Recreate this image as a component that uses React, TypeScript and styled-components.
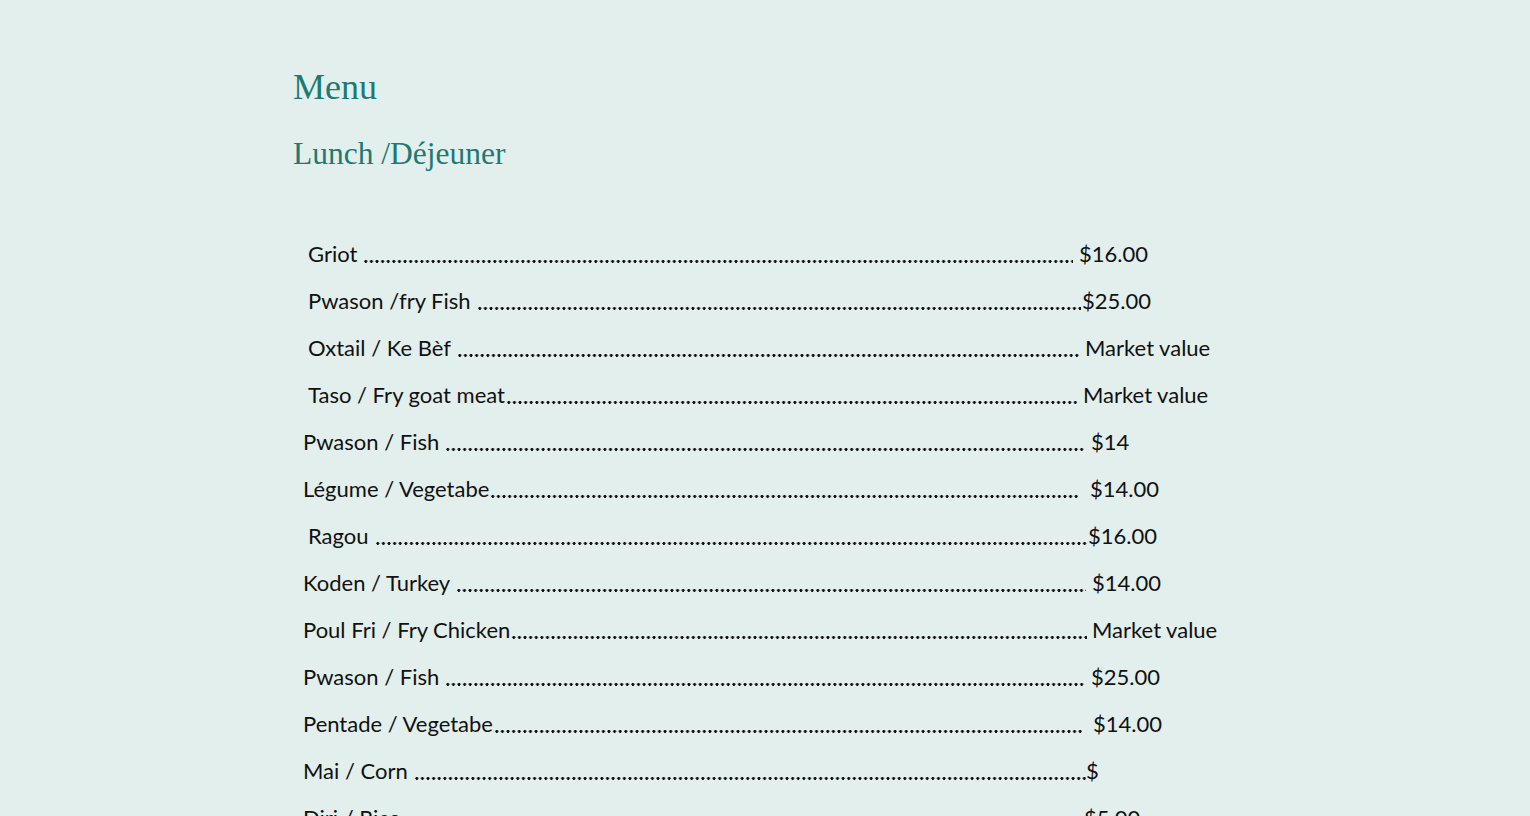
import React from 'react';
import styled, { createGlobalStyle } from 'styled-components';

interface MenuItem {
  name: string;
  price: string;
  indent: number; // left offset of the name inside the list
  end: number; // where the dotted leader stops, from the list's left edge
  gap: number; // space between leader and price
}

const items: MenuItem[] = [
  { name: 'Griot', price: '$16.00', indent: 15, end: 780, gap: 6 },
  { name: 'Pwason /fry Fish', price: '$25.00', indent: 15, end: 788, gap: 1 },
  { name: 'Oxtail / Ke Bèf', price: 'Market value', indent: 15, end: 786, gap: 6 },
  { name: 'Taso / Fry goat meat', price: 'Market value', indent: 15, end: 784, gap: 6 },
  { name: 'Pwason / Fish', price: '$14', indent: 10, end: 792, gap: 6 },
  { name: 'Légume / Vegetabe', price: '$14.00', indent: 10, end: 786, gap: 11 },
  { name: 'Ragou', price: '$16.00', indent: 15, end: 794, gap: 1 },
  { name: 'Koden / Turkey', price: '$14.00', indent: 10, end: 793, gap: 6 },
  { name: 'Poul Fri / Fry Chicken', price: 'Market value', indent: 10, end: 794, gap: 5 },
  { name: 'Pwason / Fish', price: '$25.00', indent: 10, end: 792, gap: 6 },
  { name: 'Pentade / Vegetabe', price: '$14.00', indent: 10, end: 789, gap: 11 },
  { name: 'Mai / Corn', price: '$', indent: 10, end: 793, gap: 0 },
  { name: 'Diri / Rice', price: '$5.00', indent: 10, end: 791, gap: 0 },
];

// names glued to their leader (no space before the dots)
const tight = new Set(['Taso / Fry goat meat', 'Légume / Vegetabe', 'Poul Fri / Fry Chicken', 'Pentade / Vegetabe']);

const App: React.FC = () => {
  return (
    <>
      <GlobalStyle />
      <Page>
        <Title>Menu</Title>
        <Subtitle>Lunch /Déjeuner</Subtitle>
        <List>
          {items.map((item, i) => (
            <Row key={i} $indent={item.indent}>
              <Line $width={item.end - item.indent}>
                <Name>{item.name}</Name>
                <Leader $tight={tight.has(item.name)} />
              </Line>
              <Price $gap={item.gap}>{item.price}</Price>
            </Row>
          ))}
        </List>
      </Page>
    </>
  );
};

const GlobalStyle = createGlobalStyle`
  html, body {
    margin: 0;
    padding: 0;
    background: #e2efed;
  }
  body {
    font-family: Lato, 'Liberation Sans', sans-serif;
    color: #111111;
  }
`;

const Page = styled.div`
  max-width: 944px;
  margin: 0 auto;
  padding-top: 64px;
  height: 816px;
  box-sizing: border-box;
  overflow: hidden;
`;

const Title = styled.h1`
  margin: 0;
  font-family: 'Liberation Serif', serif;
  font-weight: 400;
  font-size: 36px;
  line-height: 46px;
  color: #1e7a70;
`;

const Subtitle = styled.h2`
  margin: 24px 0 0;
  font-family: 'Liberation Serif', serif;
  font-weight: 400;
  font-size: 31.5px;
  line-height: 40px;
  color: #1e7a70;
`;

const List = styled.div`
  margin-top: 66px;
  display: flex;
  flex-direction: column;
  gap: 19px;
`;

const Row = styled.div<{ $indent: number }>`
  display: flex;
  align-items: baseline;
  padding-left: ${(p) => p.$indent}px;
  font-size: 22px;
  line-height: 28px;
  white-space: nowrap;
`;

const Line = styled.div<{ $width: number }>`
  display: flex;
  flex: none;
  width: ${(p) => p.$width}px;
`;

const Name = styled.span`
  flex: none;
`;

const Leader = styled.span<{ $tight: boolean }>`
  flex: 1;
  margin-left: ${(p) => (p.$tight ? 1 : 6)}px;
  background-image: radial-gradient(circle at 2.8px 21.3px, #111111 1.3px, transparent 1.7px);
  background-size: 5.62px 28px;
  background-repeat: repeat-x;
`;

const Price = styled.span<{ $gap: number }>`
  flex: none;
  margin-left: ${(p) => p.$gap}px;
`;

export default App;
